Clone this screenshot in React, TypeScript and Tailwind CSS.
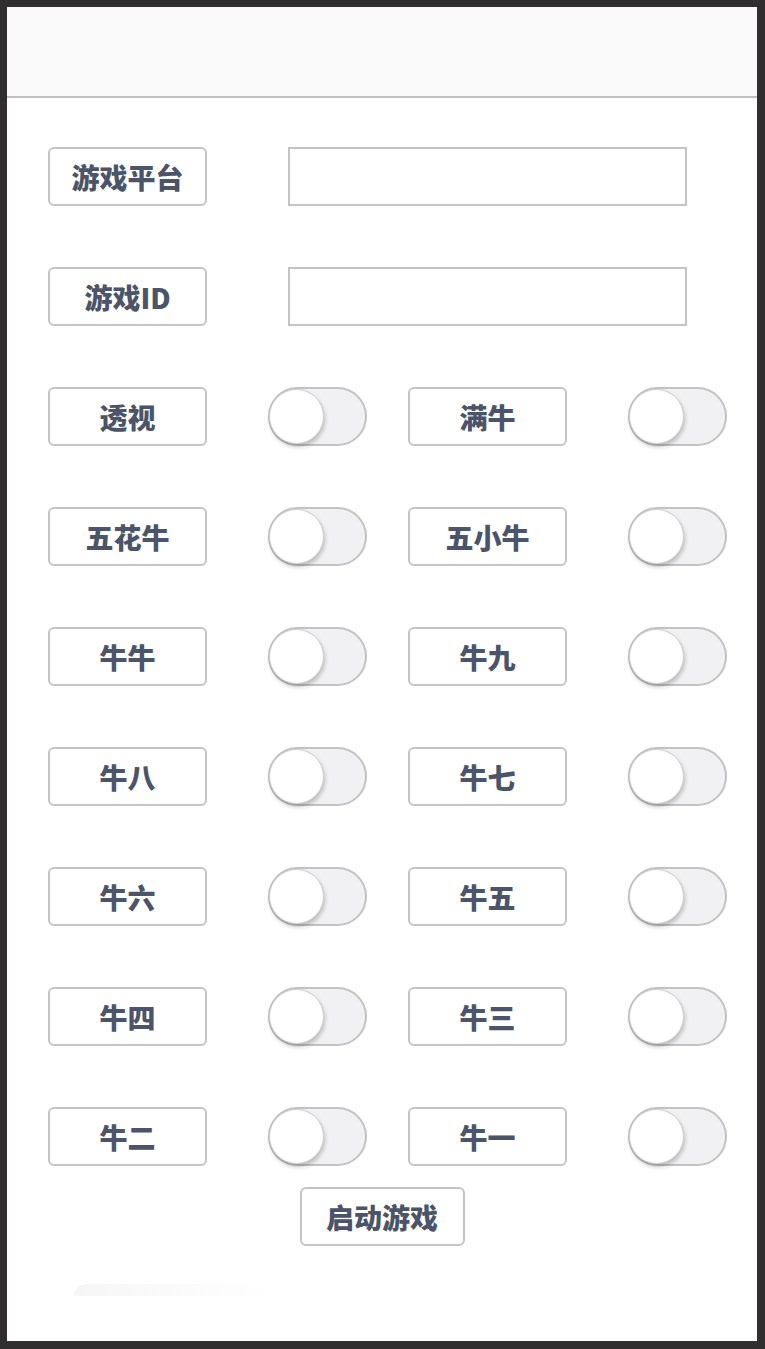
import React from "react";

const FONT = { fontFamily: '"Noto Sans CJK SC", "Noto Sans", sans-serif' };

const ROWS: [string, string][] = [
  ["透视", "满牛"],
  ["五花牛", "五小牛"],
  ["牛牛", "牛九"],
  ["牛八", "牛七"],
  ["牛六", "牛五"],
  ["牛四", "牛三"],
  ["牛二", "牛一"],
];

function Label({ text }: { text: string }) {
  return (
    <div className="w-[159px] h-[59px] shrink-0 flex items-center justify-center border-2 border-[#c4c4c4] rounded-md text-[28px] font-black text-[#4b5468] leading-none">
      {text}
    </div>
  );
}

function Toggle() {
  return (
    <div className="relative w-[99px] h-[59px] shrink-0 rounded-full border-2 border-[#c2c2c2] bg-[#f1f1f3]">
      <div className="absolute left-[-1px] top-[0px] w-[55px] h-[55px] rounded-full bg-white border border-[#cfcfcf] shadow-[1px_3px_4px_rgba(0,0,0,0.22)]" />
    </div>
  );
}

export default function App() {
  return (
    <div className="h-[1349px] bg-[#302e2f] pt-[7px] pl-[7px] pr-[8px] pb-[8px]" style={FONT}>
      <div className="h-full bg-white flex flex-col">
        {/* header */}
        <div className="h-[91px] bg-[#f9f9f9] border-b-2 border-[#c0c0c0] shrink-0" />

        <div className="flex flex-col pl-[41px] pt-[49px] gap-[61px]">
          <div className="flex items-center">
            <Label text="游戏平台" />
            <div className="ml-[81px] w-[399px] h-[59px] border-2 border-[#c4c4c4]" />
          </div>
          <div className="flex items-center">
            <Label text="游戏ID" />
            <div className="ml-[81px] w-[399px] h-[59px] border-2 border-[#c4c4c4]" />
          </div>
          {ROWS.map(([a, b]) => (
            <div key={a} className="flex items-center">
              <Label text={a} />
              <div className="ml-[61px]">
                <Toggle />
              </div>
              <div className="ml-[41px]">
                <Label text={b} />
              </div>
              <div className="ml-[61px]">
                <Toggle />
              </div>
            </div>
          ))}
        </div>

        <div className="flex justify-center mt-[21px]">
          <button className="w-[165px] h-[59px] border-2 border-[#c4c4c4] rounded-md text-[28px] font-black text-[#4b5468] bg-white leading-none">
            启动游戏
          </button>
        </div>

        <div className="ml-[67px] mt-[38px] w-[204px] h-[12px] bg-gradient-to-r from-[#f6f6f6] to-white rounded-tl-[20px]" />
      </div>
    </div>
  );
}
